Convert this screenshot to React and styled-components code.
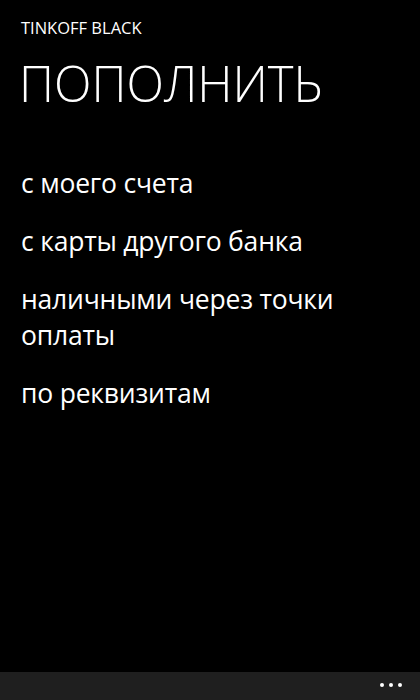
import styled, { createGlobalStyle } from "styled-components";

const GlobalStyle = createGlobalStyle`
  html, body {
    margin: 0;
    padding: 0;
    background: #000;
  }
  body {
    font-family: "Open Sans", "Noto Sans", sans-serif;
    color: #fff;
  }
`;

const items = [
  "с моего счета",
  "с карты другого банка",
  "наличными через точки оплаты",
  "по реквизитам",
];

export default function App() {
  return (
    <>
      <GlobalStyle />
      <Page>
        <Content>
          <AppTitle>TINKOFF BLACK</AppTitle>
          <PageTitle>пополнить</PageTitle>
          <List>
            {items.map((item) => (
              <Item key={item}>{item}</Item>
            ))}
          </List>
        </Content>
        <AppBar>
          <MoreDots>
            <Dot />
            <Dot />
            <Dot />
          </MoreDots>
        </AppBar>
      </Page>
    </>
  );
}

const Page = styled.div`
  display: flex;
  flex-direction: column;
  height: 700px;
  background: #000;
  overflow: hidden;
`;

const Content = styled.div`
  flex: 1;
  display: flex;
  flex-direction: column;
  padding: 17px 22px 0 21px;
`;

const AppTitle = styled.div`
  font-size: 16.5px;
  line-height: 22px;
  font-weight: 400;
`;

const PageTitle = styled.h1`
  margin: 16px 0 0 -2px;
  font-size: 49px;
  line-height: 56px;
  font-weight: 300;
  text-transform: uppercase;
  letter-spacing: 0;
`;

const List = styled.div`
  display: flex;
  flex-direction: column;
  gap: 22px;
  margin-top: 54px;
  max-width: 350px;
`;

const Item = styled.div`
  font-size: 26.5px;
  line-height: 36px;
  font-weight: 400;
  letter-spacing: -0.2px;
`;

const AppBar = styled.div`
  height: 28px;
  background: #1f1f1f;
  display: flex;
  justify-content: flex-end;
  align-items: flex-start;
  padding-right: 18px;
`;

const MoreDots = styled.div`
  display: flex;
  gap: 5px;
  margin-top: 11px;
`;

const Dot = styled.span`
  width: 4px;
  height: 4px;
  border-radius: 50%;
  background: #fff;
`;
